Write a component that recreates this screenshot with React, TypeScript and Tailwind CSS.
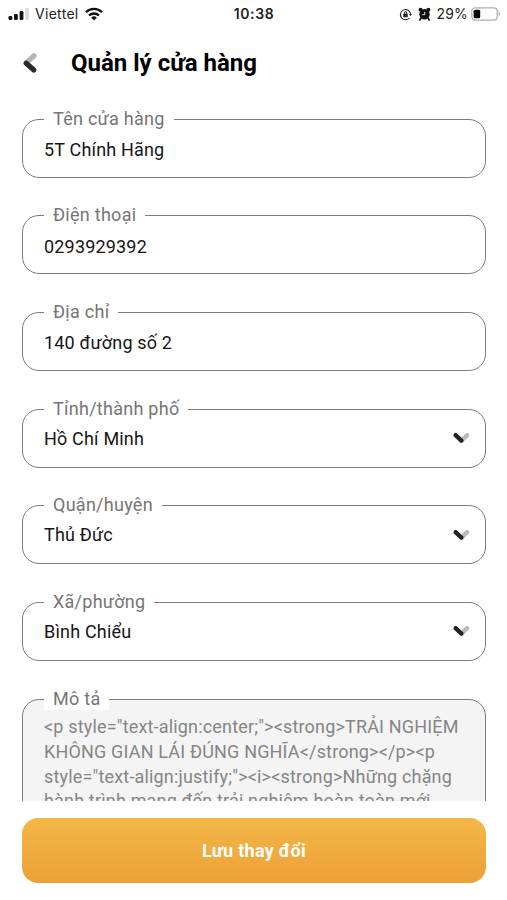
import { clsx } from "clsx";

type Field = {
    id: string;
    label: string;
    value: string;
    select?: boolean;
};

const fields: Field[] = [
    { id: "name", label: "Tên cửa hàng", value: "5T Chính Hãng" },
    { id: "phone", label: "Điện thoại", value: "0293929392" },
    { id: "address", label: "Địa chỉ", value: "140 đường số 2" },
    { id: "province", label: "Tỉnh/thành phố", value: "Hồ Chí Minh", select: true },
    { id: "district", label: "Quận/huyện", value: "Thủ Đức", select: true },
    { id: "ward", label: "Xã/phường", value: "Bình Chiểu", select: true },
];

const descriptionLines = [
    '<p style="text-align:center;"><strong>TRẢI NGHIỆM',
    "KHÔNG GIAN LÁI ĐÚNG NGHĨA</strong></p><p",
    'style="text-align:justify;"><i><strong>Những chặng',
    "hành trình mang đến trải nghiệm hoàn toàn mới",
];

function StatusBar() {
    return (
        <div className="grid h-[28px] shrink-0 grid-cols-3 items-center pr-[6px] pl-[8px] font-['Inter',sans-serif] text-[14px] leading-none text-[#222]">
            <div className="flex items-center">
                <svg width="22" height="12" viewBox="0 0 22 12" fill="#111">
                    <rect x="0.5" y="8" width="3.8" height="4" rx="1.2" />
                    <rect x="6" y="6" width="3.8" height="6" rx="1.2" />
                    <rect x="11.6" y="3" width="3.8" height="9" rx="1.2" />
                    <rect x="17.2" y="0" width="3.8" height="12" rx="1.2" fill="#ddd" />
                </svg>
                <span className="ml-[5px] tracking-[0.3px]">Viettel</span>
                <svg className="ml-[6px]" width="18" height="14" viewBox="0 0 18 14" fill="none" stroke="#111" strokeWidth="2.3">
                    <path d="M1 5.2a11.4 11.4 0 0 1 16 0" />
                    <path d="M4 8.5a7.2 7.2 0 0 1 10 0" />
                    <path d="M9 13.5 6.2 10.7a4 4 0 0 1 5.6 0z" fill="#111" stroke="none" />
                </svg>
            </div>
            <span className="-ml-[1px] text-center font-semibold tracking-[0.6px]">10:38</span>
            <div className="flex items-center justify-end">
                <svg width="13" height="13" viewBox="0 0 14 14" fill="none" stroke="#222" strokeWidth="1.1">
                    <path d="M11.2 10.8A5.5 5.5 0 1 1 12.5 7" />
                    <path d="M10.8 6.5h3.2l-1.6 2.2z" fill="#222" stroke="none" />
                    <rect x="4.6" y="6.2" width="4.8" height="3.8" rx="0.6" fill="#222" stroke="none" />
                    <path d="M5.7 6.6V5.4a1.3 1.3 0 0 1 2.6 0v1.2" />
                </svg>
                <svg className="ml-[6px]" width="13" height="14" viewBox="0 0 13 14" fill="#111">
                    <circle cx="6.5" cy="7.3" r="5.2" />
                    <circle cx="2.6" cy="2.8" r="2" />
                    <circle cx="10.4" cy="2.8" r="2" />
                    <path d="m3 11-1.2 2M10 11l1.2 2" stroke="#111" strokeWidth="1.6" strokeLinecap="round" />
                    <path d="M4.4 7.7h2.3V5" fill="none" stroke="#fff" strokeWidth="0.9" />
                </svg>
                <span className="ml-[5px] tracking-[0.2px]">29%</span>
                <svg className="ml-[3px]" width="30" height="14" viewBox="0 0 30 14">
                    <rect x="0.8" y="0.9" width="25.4" height="12.2" rx="3.4" fill="none" stroke="#b0b0b0" strokeWidth="1.3" />
                    <rect x="2.6" y="2.7" width="6.6" height="8.6" rx="1.6" fill="#000" />
                    <path d="M27.6 4.8v4.4a2.4 2.4 0 0 0 0-4.4z" fill="#b0b0b0" />
                </svg>
            </div>
        </div>
    );
}

function BackIcon() {
    return (
        <svg width="16" height="22" viewBox="0 0 16 22" fill="none" strokeWidth="5.2" strokeLinecap="round">
            <path d="M4.4 10.6 12 3.8" stroke="#b5b5b5" />
            <path d="M4.2 11.2 11.8 18" stroke="#2b2b2b" />
        </svg>
    );
}

function ChevronIcon() {
    return (
        <svg width="18" height="12" viewBox="0 0 18 12" fill="none" strokeWidth="4.4" strokeLinecap="round">
            <path d="M9.6 8.8 15 3.2" stroke="#b9b9b9" />
            <path d="M3.6 3.2 9.4 8.6" stroke="#252525" />
        </svg>
    );
}

function FieldLabel({ htmlFor, children }: { htmlFor: string; children: string }) {
    return (
        <label
            htmlFor={htmlFor}
            className="absolute -top-[12px] left-[21.5px] bg-white px-[9px] text-[18px] leading-[22px] tracking-[0.27px] whitespace-nowrap text-[#757575]"
        >
            {children}
        </label>
    );
}

function OutlinedField({ id, label, value, select }: Field) {
    return (
        <div className="relative flex h-[59px] shrink-0 items-center justify-between rounded-[17px] border-[1.5px] border-[#7c7c7c] pr-[15px] pl-[21.5px]">
            <FieldLabel htmlFor={id}>{label}</FieldLabel>
            <span
                id={id}
                className={clsx("text-[18px] leading-[22px] tracking-[0.18px] text-[#151515]", select ? "pt-px" : "pt-[4px]")}
            >
                {value}
            </span>
            {select && <ChevronIcon />}
        </div>
    );
}

export default function App() {
    return (
        <div className="flex h-[900px] w-full flex-col overflow-hidden bg-white font-['Roboto',sans-serif]">
            <StatusBar />

            <header className="flex h-[70px] shrink-0 items-center pl-[22px]">
                <BackIcon />
                <h1 className="ml-[33px] text-[24px] leading-[30px] font-bold text-black">Quản lý cửa hàng</h1>
            </header>

            <main className="flex h-[703px] shrink-0 flex-col gap-[37.7px] overflow-hidden px-[21.5px] pt-[20.5px]">
                {fields.map((field) => (
                    <OutlinedField key={field.id} {...field} />
                ))}

                <div className="relative h-[160px] shrink-0 rounded-[17px] border-[1.5px] border-[#7c7c7c] bg-[#f4f4f4] pt-[15.5px] pl-[21.5px]">
                    <FieldLabel htmlFor="description">Mô tả</FieldLabel>
                    <div id="description" className="text-[18px] leading-[24.7px] tracking-[0.17px] whitespace-nowrap text-[#858585]">
                        {descriptionLines.map((line) => (
                            <p key={line}>{line}</p>
                        ))}
                    </div>
                </div>
            </main>

            <footer className="pt-[17px] pr-[21px] pl-[22px]">
                <button className="h-[65px] w-full rounded-[16px] bg-linear-to-b from-[#f2b747] to-[#eea038] text-[18px] font-bold tracking-[0.3px] text-white">
                    Lưu thay đổi
                </button>
            </footer>
        </div>
    );
}
